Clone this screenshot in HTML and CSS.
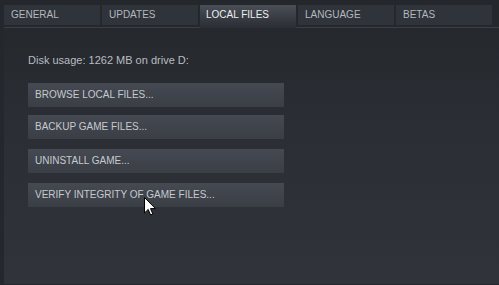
FILE: index.html
```html
<!DOCTYPE html>
<html>
<head>
<meta charset="utf-8">
<link rel="stylesheet" href="styles.css">
</head>
<body>
<div class="window">
  <div class="tabs">
    <div class="tab">GENERAL</div>
    <div class="tab">UPDATES</div>
    <div class="tab active">LOCAL FILES</div>
    <div class="tab">LANGUAGE</div>
    <div class="tab">BETAS</div>
  </div>
  <div class="panel">
    <div class="usage">Disk usage: 1262 MB on drive D:</div>
    <div class="buttons">
      <div class="btn">BROWSE LOCAL FILES...</div>
      <div class="btn second">BACKUP GAME FILES...</div>
      <div class="btn">UNINSTALL GAME...</div>
      <div class="btn">VERIFY INTEGRITY OF GAME FILES...</div>
    </div>
  </div>
  <svg class="cursor" width="12" height="19" viewBox="0 0 12 19">
    <path d="M0.5 0.5 L0.5 16 L4.2 12.4 L6.6 18 L8.8 17 L6.5 11.6 L11.5 11.6 Z" fill="#ffffff" stroke="#000000" stroke-width="1" stroke-linejoin="miter"/>
  </svg>
</div>
</body>
</html>
```

FILE: styles.css
```css
html, body {
  margin: 0;
  padding: 0;
}
body {
  width: 499px;
  height: 285px;
  overflow: hidden;
  background: #24272c;
  font-family: "Liberation Sans", Arial, sans-serif;
}
.window {
  position: relative;
  width: 499px;
  height: 285px;
}
.tabs {
  display: flex;
  align-items: flex-start;
  gap: 2px;
  padding: 5px 0 0 4px;
  height: 22px;
}
.tab {
  width: 96px;
  height: 20px;
  line-height: 20px;
  padding-left: 7px;
  box-sizing: border-box;
  background: #2f333a;
  color: #b4b8bd;
  font-size: 10px;
}
.tab.active {
  height: 23px;
  position: relative;
  z-index: 2;
  padding-left: 6px;
  background: linear-gradient(to bottom, #4a4e56 0%, #3a3e45 50%, #2a2d33 100%);
  color: #eceef0;
}
.panel {
  margin-left: 4px;
  height: 257px;
  border-top: 1px solid #3b3f46;
  background: linear-gradient(to bottom, #25282d 0%, #2b2e34 40%, #30343a 100%);
  padding: 26px 0 0 24px;
  box-sizing: border-box;
}
.usage {
  font-size: 11px;
  line-height: 13px;
  color: #b9bdc2;
}
.buttons {
  margin-top: 16px;
  display: flex;
  flex-direction: column;
  gap: 10px;
}
.btn {
  width: 256px;
  height: 24px;
  line-height: 24px;
  padding-left: 7px;
  box-sizing: border-box;
  font-size: 10px;
  color: #c6cacf;
  background: linear-gradient(to bottom, #454951 0%, #3a3e45 100%);
}
.btn.second {
  margin-top: -2px;
}
.cursor {
  position: absolute;
  left: 144px;
  top: 197px;
}
```
